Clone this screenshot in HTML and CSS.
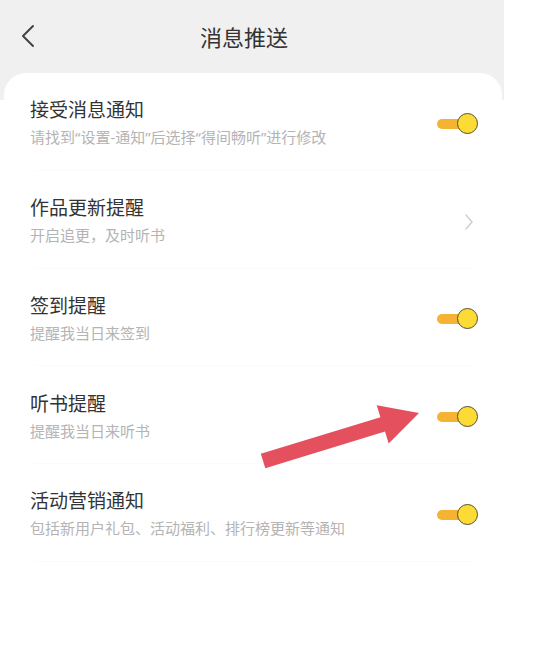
FILE: index.html
```html
<!DOCTYPE html>
<html lang="zh-CN">
<head>
<meta charset="utf-8">
<title>消息推送</title>
<link rel="stylesheet" href="styles.css">
</head>
<body>
<div class="screen">
  <header class="topbar">
    <svg class="back" width="14" height="24" viewBox="0 0 14 24"><path d="M12 2 L2 12 L12 22" fill="none" stroke="#444" stroke-width="2" stroke-linecap="round" stroke-linejoin="round"/></svg>
    <h1 class="title">消息推送</h1>
    <span></span>
  </header>
  <main class="card">
    <div class="row">
      <div class="text">
        <div class="name">接受消息通知</div>
        <div class="desc">请找到“设置-通知”后选择“得间畅听”进行修改</div>
      </div>
      <span class="toggle"><span class="track"></span><span class="knob"></span></span>
    </div>
    <div class="row">
      <div class="text">
        <div class="name">作品更新提醒</div>
        <div class="desc">开启追更，及时听书</div>
      </div>
      <svg class="chev" width="10" height="18" viewBox="0 0 10 18"><path d="M2 2 L8 9 L2 16" fill="none" stroke="#cfcfcf" stroke-width="1.5" stroke-linecap="round" stroke-linejoin="round"/></svg>
    </div>
    <div class="row">
      <div class="text">
        <div class="name">签到提醒</div>
        <div class="desc">提醒我当日来签到</div>
      </div>
      <span class="toggle"><span class="track"></span><span class="knob"></span></span>
    </div>
    <div class="row">
      <div class="text">
        <div class="name">听书提醒</div>
        <div class="desc">提醒我当日来听书</div>
      </div>
      <span class="toggle"><span class="track"></span><span class="knob"></span></span>
    </div>
    <div class="row">
      <div class="text">
        <div class="name">活动营销通知</div>
        <div class="desc">包括新用户礼包、活动福利、排行榜更新等通知</div>
      </div>
      <span class="toggle"><span class="track"></span><span class="knob"></span></span>
    </div>
  </main>
</div>
<svg class="arrow" width="544" height="672" viewBox="0 0 544 672">
  <polygon points="260.8,453.8 380.4,417.2 376.7,405.3 419,413 388.7,443.5 385,431.6 265.3,468.2" fill="#e4505e"/>
</svg>
</body>
</html>
```

FILE: styles.css
```css
html, body {
  margin: 0;
  padding: 0;
  background: #fff;
}
body {
  position: relative;
  width: 544px;
  height: 672px;
  overflow: hidden;
  font-family: "Noto Sans CJK SC", "Noto Sans", sans-serif;
}
.screen {
  width: 504px;
  background: linear-gradient(#f0f0f0 0, #f0f0f0 100px, #fff 100px);
}
.topbar {
  height: 73px;
  display: grid;
  grid-template-columns: 1fr auto 1fr;
  align-items: center;
  padding-right: 16px;
}
.back {
  margin-left: 21px;
  margin-top: -1px;
}
.title {
  margin: 0;
  font-size: 22px;
  font-weight: normal;
  color: #333;
  line-height: 30px;
  margin-top: -2px;
}
.card {
  margin: 0 2px 0 4px;
  background: #fff;
  border-radius: 22px 22px 0 0;
  padding-bottom: 100px;
}
.row {
  height: 97.75px;
  display: flex;
  align-items: center;
  justify-content: space-between;
  padding: 0 24px 0 26px;
  box-sizing: border-box;
  position: relative;
}
.row::after {
  content: "";
  position: absolute;
  left: 30px;
  right: 30px;
  bottom: 0;
  height: 1px;
  background: #fbfbfb;
}
.text {
  display: flex;
  flex-direction: column;
  gap: 4px;
  margin-top: 1px;
}
.name {
  font-size: 19px;
  line-height: 26px;
  color: #333;
}
.desc {
  font-family: "Noto Sans", "Noto Sans CJK SC", sans-serif;
  font-size: 15px;
  line-height: 22px;
  color: #b4b4b4;
}
.toggle {
  position: relative;
  width: 41px;
  height: 22px;
  flex: none;
  margin-top: 4px;
}
.track {
  position: absolute;
  left: 0;
  top: 6px;
  width: 32px;
  height: 10px;
  border-radius: 5px;
  background: #f6b333;
}
.knob {
  position: absolute;
  right: 0;
  top: 0;
  width: 19px;
  height: 19px;
  border-radius: 50%;
  background: #fcdc34;
  border: 1.5px solid #58502f;
}
.chev {
  margin-right: 4px;
  margin-top: 4px;
  flex: none;
}
.arrow {
  position: absolute;
  left: 0;
  top: 0;
  pointer-events: none;
}
```
